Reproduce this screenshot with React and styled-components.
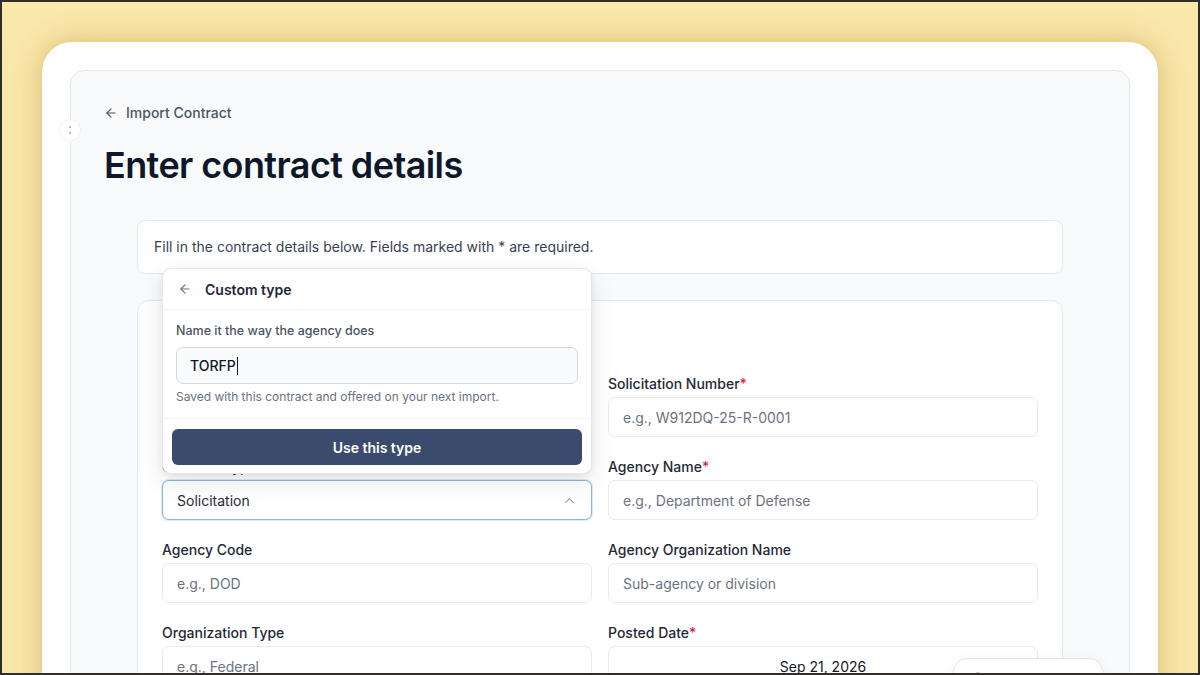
import React from "react";
import styled, { createGlobalStyle } from "styled-components";
import { ArrowLeft, ChevronUp, MessageCircle } from "lucide-react";

const GlobalStyle = createGlobalStyle`
  html, body { margin: 0; padding: 0; }
  body { font-family: Inter, "Noto Sans", sans-serif; -webkit-font-smoothing: antialiased; }
  * { box-sizing: border-box; }
`;

const Frame = styled.div`
  width: 1200px;
  height: 675px;
  border: 2px solid #2f2e2a;
  background: #f9e7ab;
  padding: 40px 40px 0;
  overflow: hidden;
`;

const Card = styled.div`
  background: #ffffff;
  border-radius: 30px 30px 0 0;
  padding: 28px 28px 0;
  height: 700px;
  box-shadow: 0 0 28px rgba(175, 135, 35, 0.45);
`;

const Panel = styled.div`
  position: relative;
  background: #f8fafc;
  border: 1px solid #e5e7eb;
  border-radius: 14px;
  padding: 32px 33px 0;
  height: 100%;
`;

const SideToggle = styled.div`
  position: absolute;
  left: -12px;
  top: 48px;
  width: 22px;
  height: 22px;
  border-radius: 50%;
  background: #ffffff;
  border: 1px solid #eef0f3;
  display: flex;
  align-items: center;
  padding-left: 9px;
`;

const Dots = styled.span`
  display: flex;
  flex-direction: column;
  gap: 4px;
  & > i { width: 2px; height: 2px; background: #b8bec8; display: block; }
`;

const Breadcrumb = styled.div`
  display: flex;
  align-items: center;
  gap: 8px;
  font-size: 14px;
  line-height: 20px;
  color: #4b5563;
  font-weight: 500;
`;

const Title = styled.h1`
  margin: 20px 0 0;
  font-size: 36px;
  line-height: 44px;
  font-weight: 600;
  letter-spacing: -0.6px;
  color: #0f172a;
`;

const Content = styled.div`
  max-width: 926px;
  margin: 33px auto 0;
`;

const InfoBox = styled.div`
  background: #ffffff;
  border: 1px solid #e5e7eb;
  border-radius: 8px;
  padding: 16px;
  font-size: 14px;
  line-height: 20px;
  color: #374151;
`;

const FormCard = styled.div`
  margin-top: 26px;
  background: #ffffff;
  border: 1px solid #e5e7eb;
  border-radius: 12px;
  padding: 73px 24px 24px;
`;

const Grid = styled.div`
  display: grid;
  grid-template-columns: 1fr 1fr;
  column-gap: 16px;
  row-gap: 20px;
`;

const Field = styled.div`
  display: flex;
  flex-direction: column;
`;

const Label = styled.label`
  font-size: 14px;
  line-height: 20px;
  font-weight: 500;
  color: #1f2937;
  margin-bottom: 3px;
`;

const Req = styled.span`
  color: #e11d48;
`;

const TextInput = styled.input`
  height: 40px;
  width: 100%;
  border: 1px solid #e8eaee;
  border-radius: 7px;
  background: #ffffff;
  padding: 0 14px;
  font-family: inherit;
  font-size: 14px;
  color: #111827;
  outline: none;
  &::placeholder { color: #6b7280; }
`;

const DateBox = styled.div`
  height: 40px;
  border: 1px solid #e8eaee;
  border-radius: 7px;
  background: #ffffff;
  display: flex;
  align-items: center;
  justify-content: center;
  font-size: 14px;
  color: #111827;
`;

const SelectWrap = styled.div`
  position: relative;
`;

const SelectBox = styled.div`
  height: 40px;
  border: 1px solid #86b8e2;
  border-radius: 7px;
  background: #ffffff;
  display: flex;
  align-items: center;
  justify-content: space-between;
  padding: 0 14px;
  font-size: 14px;
  color: #1f2937;
  box-shadow: 0 0 0 1px rgba(134, 184, 226, 0.3);
`;

const Popover = styled.div`
  position: absolute;
  left: 0;
  right: 0;
  bottom: calc(100% + 6px);
  background: #ffffff;
  border: 1px solid #e5e7eb;
  border-radius: 9px;
  box-shadow: 0 8px 24px rgba(15, 23, 42, 0.10), 0 2px 6px rgba(15, 23, 42, 0.06);
  z-index: 10;
  overflow: hidden;
`;

const PopHeader = styled.div`
  height: 41px;
  border-bottom: 1px solid #f1f3f6;
  display: flex;
  align-items: center;
  gap: 13px;
  padding: 0 15px;
  font-size: 14px;
  font-weight: 600;
  color: #1f2937;
`;

const PopBody = styled.div`
  padding: 13px 13px;
  display: flex;
  flex-direction: column;
`;

const PopLabel = styled.div`
  font-size: 12.5px;
  line-height: 16px;
  font-weight: 500;
  color: #4b5563;
  margin-bottom: 8px;
`;

const PopInput = styled.div`
  height: 37px;
  border: 1px solid #d5d9df;
  border-radius: 7px;
  background: #f9fafb;
  display: flex;
  align-items: center;
  padding: 0 13px;
  font-size: 14px;
  font-weight: 500;
  color: #111827;
`;

const Caret = styled.span`
  display: inline-block;
  width: 1px;
  height: 18px;
  background: #111827;
  margin-left: 1px;
`;

const Help = styled.div`
  margin-top: 5px;
  font-size: 12px;
  line-height: 16px;
  color: #6b7280;
`;

const PopFooter = styled.div`
  border-top: 1px solid #f1f3f6;
  padding: 10px 9px 8px;
`;

const PrimaryButton = styled.button`
  width: 100%;
  height: 36px;
  border: none;
  border-radius: 6px;
  background: #3b4b6d;
  color: #ffffff;
  font-family: inherit;
  font-size: 14px;
  font-weight: 600;
`;

const FloatPill = styled.div`
  position: absolute;
  right: 26px;
  top: 587px;
  width: 150px;
  height: 44px;
  border-radius: 14px;
  background: #ffffff;
  border: 1px solid #e5e7eb;
  box-shadow: 0 4px 14px rgba(15, 23, 42, 0.08);
  display: flex;
  align-items: flex-start;
  gap: 8px;
  padding: 13px 16px 0;
  font-size: 14px;
  color: #111827;
`;

function InputField({ label, req, placeholder }) {
  return (
    <Field>
      <Label>
        {label}
        {req && <Req>*</Req>}
      </Label>
      <TextInput placeholder={placeholder} readOnly />
    </Field>
  );
}

export default function App() {
  return (
    <>
      <GlobalStyle />
      <Frame>
        <Card>
          <Panel>
            <SideToggle>
              <Dots>
                <i />
                <i />
              </Dots>
            </SideToggle>
            <Breadcrumb>
              <ArrowLeft size={14} strokeWidth={2} />
              Import Contract
            </Breadcrumb>
            <Title>Enter contract details</Title>
            <Content>
              <InfoBox>
                Fill in the contract details below. Fields marked with * are required.
              </InfoBox>
              <FormCard>
                <Grid>
                  <InputField label="Title" req placeholder="" />
                  <InputField label="Solicitation Number" req placeholder="e.g., W912DQ-25-R-0001" />
                  <Field>
                    <Label>
                      Contract Type<Req>*</Req>
                    </Label>
                    <SelectWrap>
                      <Popover>
                        <PopHeader>
                          <ArrowLeft size={14} color="#6b7280" strokeWidth={2} />
                          Custom type
                        </PopHeader>
                        <PopBody>
                          <PopLabel>Name it the way the agency does</PopLabel>
                          <PopInput>
                            TORFP
                            <Caret />
                          </PopInput>
                          <Help>Saved with this contract and offered on your next import.</Help>
                        </PopBody>
                        <PopFooter>
                          <PrimaryButton>Use this type</PrimaryButton>
                        </PopFooter>
                      </Popover>
                      <SelectBox>
                        Solicitation
                        <ChevronUp size={15} color="#9ca3af" strokeWidth={2} />
                      </SelectBox>
                    </SelectWrap>
                  </Field>
                  <InputField label="Agency Name" req placeholder="e.g., Department of Defense" />
                  <InputField label="Agency Code" placeholder="e.g., DOD" />
                  <InputField label="Agency Organization Name" placeholder="Sub-agency or division" />
                  <InputField label="Organization Type" placeholder="e.g., Federal" />
                  <Field>
                    <Label>
                      Posted Date<Req>*</Req>
                    </Label>
                    <DateBox>Sep 21, 2026</DateBox>
                  </Field>
                </Grid>
              </FormCard>
            </Content>
            <FloatPill>
              <MessageCircle size={16} color="#111827" />
            </FloatPill>
          </Panel>
        </Card>
      </Frame>
    </>
  );
}
